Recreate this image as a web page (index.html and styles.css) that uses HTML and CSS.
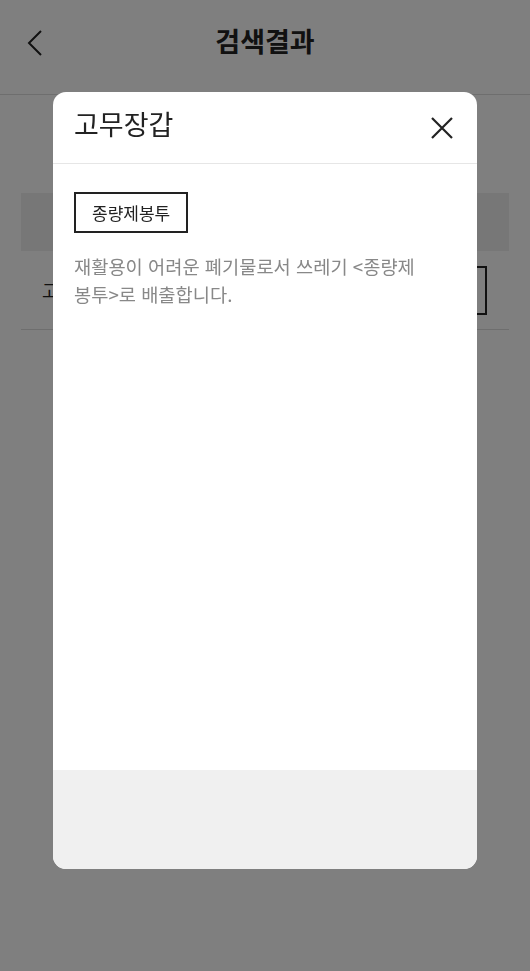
FILE: index.html
```html
<!DOCTYPE html>
<html lang="ko">
<head>
<meta charset="utf-8">
<title>검색결과</title>
<link rel="stylesheet" href="styles.css">
</head>
<body>
<div class="page">
  <header class="topbar">
    <span class="back">
      <svg width="16" height="26" viewBox="0 0 16 26"><path d="M14 1 L2 13 L14 25" fill="none" stroke="#222" stroke-width="2"/></svg>
    </span>
    <h1 class="topbar-title">검색결과</h1>
  </header>
  <main class="content">
    <div class="table-head"></div>
    <div class="table-row">
      <span class="row-name">고무장갑</span>
      <span class="row-btn"></span>
    </div>
  </main>
</div>
<div class="overlay">
  <div class="modal">
    <div class="modal-head">
      <h2 class="modal-title">고무장갑</h2>
      <span class="close">
        <svg width="22" height="22" viewBox="0 0 22 22"><path d="M1 1 L21 21 M21 1 L1 21" fill="none" stroke="#222" stroke-width="2.2"/></svg>
      </span>
    </div>
    <div class="modal-body">
      <span class="tag">종량제봉투</span>
      <p class="desc">재활용이 어려운 폐기물로서 쓰레기 &lt;종량제<br>봉투&gt;로 배출합니다.</p>
    </div>
    <div class="modal-foot"></div>
  </div>
</div>
</body>
</html>
```
FILE: styles.css
```css
* { box-sizing: border-box; }
html, body {
  margin: 0;
  padding: 0;
  width: 530px;
  height: 971px;
  overflow: hidden;
  font-family: "Noto Sans CJK KR", "Noto Sans", sans-serif;
  background: #fff;
  color: #222;
}
.page { width: 530px; }
.topbar {
  height: 95px;
  border-bottom: 1px solid #ddd;
  display: flex;
  align-items: center;
  justify-content: center;
  position: relative;
}
.back {
  position: absolute;
  left: 27px;
  top: 30px;
  display: flex;
}
.topbar-title {
  margin: 0;
  font-size: 27px;
  font-weight: 700;
  margin-top: -14px;
}
.content {
  padding: 98px 21px 0;
}
.table-head {
  height: 58px;
  background: #eee;
}
.table-row {
  height: 79px;
  border-bottom: 1px solid #ddd;
  display: flex;
  align-items: center;
  justify-content: space-between;
  padding: 0 22px 0 21px;
}
.row-name { font-size: 18px; }
.row-btn {
  border: 2px solid #222;
  height: 49px;
  width: 100px;
}
.overlay {
  position: fixed;
  inset: 0;
  background: rgba(0, 0, 0, 0.5);
  display: flex;
  justify-content: center;
  padding-top: 92px;
}
.modal {
  width: 424px;
  height: 777px;
  background: #fff;
  border-radius: 13px;
  overflow: hidden;
  display: flex;
  flex-direction: column;
}
.modal-head {
  height: 72px;
  border-bottom: 1px solid #e6e6e6;
  display: flex;
  align-items: center;
  justify-content: space-between;
  padding: 0 24px 0 21px;
}
.modal-title {
  margin: 0;
  font-size: 27px;
  font-weight: 400;
  margin-top: -8px;
  color: #222;
}
.close { display: flex; }
.modal-body {
  flex: 1;
  padding: 28px 21px 0;
}
.tag {
  display: inline-flex;
  align-items: center;
  height: 41px;
  padding: 0 16px;
  border: 2px solid #222;
  font-size: 17px;
  color: #222;
}
.desc {
  margin: 19px 0 0;
  font-size: 18.7px;
  line-height: 28px;
  color: #888;
}
.modal-foot {
  height: 99px;
  background: #f0f0f0;
}
```
